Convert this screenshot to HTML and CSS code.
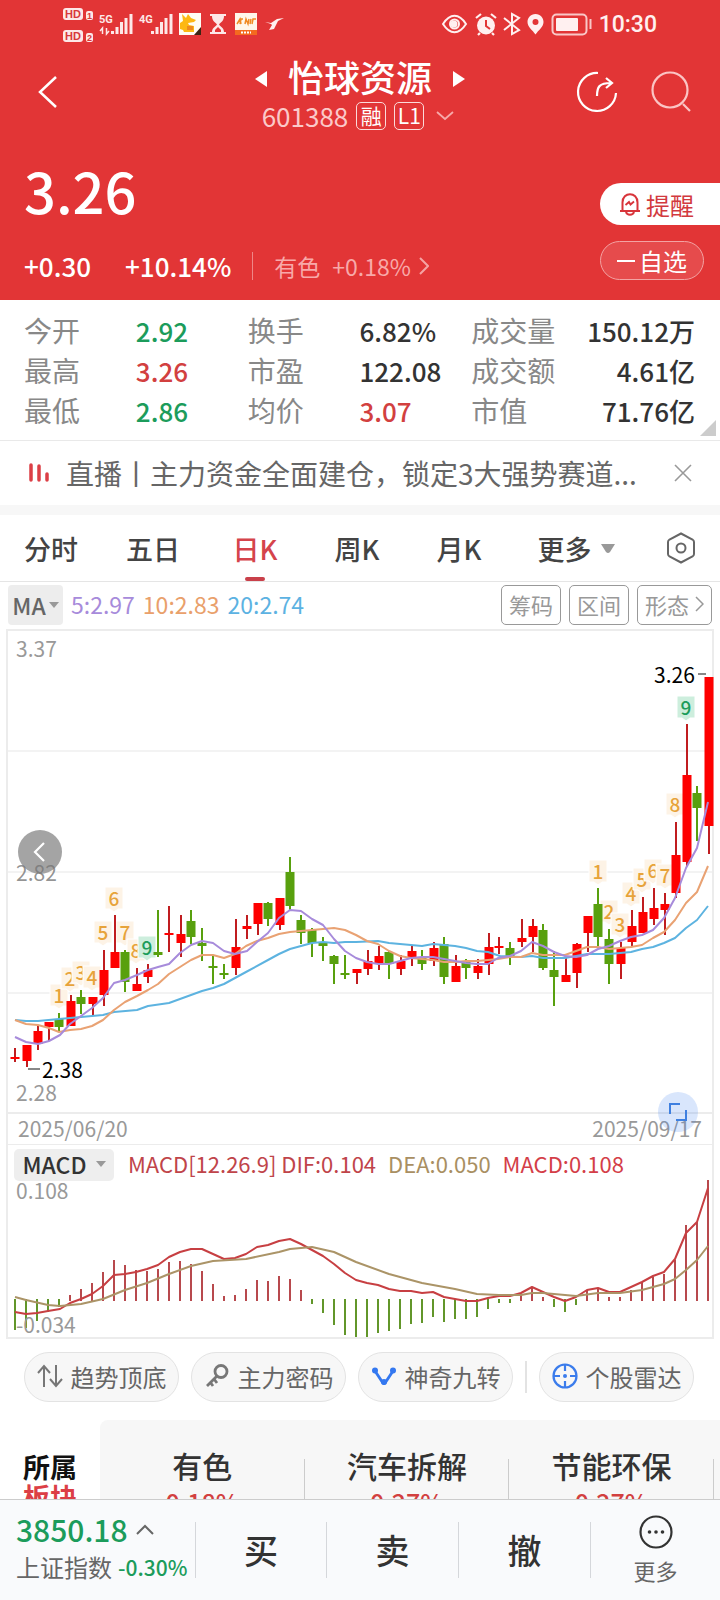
FILE: index.html
```html
<!DOCTYPE html>
<html lang="zh-CN">
<head>
<meta charset="utf-8">
<meta name="viewport" content="width=device-width, initial-scale=1">
<title>怡球资源 601388</title>
<link rel="stylesheet" href="styles.css">
</head>
<body>
<div class="app">
  <header class="hero">
    <div class="status">
      <svg class="status-left" viewBox="60 0 226 48" width="226" height="48" aria-hidden="true">
        <g fill="#fde8e8">
          <rect x="63" y="8" width="20" height="12" rx="3"/>
          <rect x="86" y="11" width="7" height="9" rx="2"/>
          <rect x="63" y="30" width="20" height="12" rx="3"/>
          <rect x="86" y="33" width="7" height="9" rx="2"/>
        </g>
        <g class="hd-text">
          <text x="65" y="18">HD</text><text x="65" y="40">HD</text>
        </g>
        <g class="sim-text"><text x="87" y="19">1</text><text x="87" y="41">2</text></g>
        <g class="net-text"><text x="99" y="23">5G</text><text x="139" y="23">4G</text></g>
        <path d="M102.500 34v-6l-2.500 3M106.500 28v6l2.500-3" fill="none" stroke="#fde8e8" stroke-width="1.500"/>
        <path d="M112.500 34v-3M117 34v-7M121.500 34v-12M126 34v-16M131 34v-20M152.500 34v-3M157 34v-7M161.500 34v-12M166 34v-16M171 34v-20" stroke="#fde8e8" stroke-width="3"/>
        <rect x="179" y="13" width="22" height="22" fill="#fffdf5"/>
        <path d="M182 14l4 4 2-4 3 4 5 2-2 2-6 1 1 2 5 1v6h-10l-1-2-3-1v-6l3-2z" fill="#fdb813"/>
        <path d="M187 26h6v4h-6z" fill="#ef8a1c"/><path d="M194 35l7-8v8z" fill="#3b2412"/>
        <path d="M210 14h16v2h-2c0 5-3 6-5 8.500 2 2.500 5 3.500 5 7.500h2v2h-16v-2h2c0-4 3-5 5-7.500-2-2.500-5-3.500-5-8.500h-2z" fill="#fde8e8"/>
        <path d="M215 30l3-3 3 3v2h-6z" fill="#e23536"/>
        <rect x="235" y="13" width="22" height="22" fill="#fff6ea"/>
        <path d="M237 24l3-5 1 5M243 19h-2l-1 5M245 24l1-5 2 5 1-5M251 19l-1 5M252 24l1-5h3" stroke="#f08a24" stroke-width="1.500" fill="none"/>
        <path d="M235 30h22v5h-22z" fill="#f46a1f"/><path d="M241 32.500h10" stroke="#fff" stroke-width="2" stroke-dasharray="2 1"/>
        <path d="M265 22l6 1 6-4 7-1-6 3-4 8-5 1 3-5-1-1z" fill="#fff0f0"/>
      </svg>
      <div class="status-right">
        <svg viewBox="442 0 152 48" width="152" height="48" aria-hidden="true">
          <g fill="none" stroke="#fff0f0" stroke-width="2">
            <path d="M444 24c7-11 16-11 23 0-7 11-16 11-23 0z"/>
            <circle cx="455.500" cy="24" r="4.500"/>
          </g>
          <circle cx="455" cy="24" r="3.500" fill="#fff0f0"/>
          <circle cx="487" cy="25.500" r="9" fill="#fff0f0"/>
          <path d="M477 18l5-4M497 18l-5-4M481 33l-2 2M493 33l2 2" stroke="#fff0f0" stroke-width="2.200"/>
          <path d="M487 20v6l4 3" stroke="#e23536" stroke-width="2" fill="none"/>
          <path d="M505 18l15 12-7 4v-20l7 4-15 12" fill="none" stroke="#fff0f0" stroke-width="2"/>
          <path fill-rule="evenodd" d="M536.500 14c-5 0-8 4-8 8 0 5 5 8 8 12.500 3-4.500 8-7.500 8-12.500 0-4-3-8-8-8zm0 5a3 3 0 1 1 0 6 3 3 0 0 1 0-6z" fill="#fff0f0"/>
          <rect x="553.500" y="14.500" width="34" height="20" rx="4" fill="none" stroke="#f9c7c7" stroke-width="2"/>
          <rect x="557" y="18" width="22" height="13" rx="1" fill="#fff0f0"/>
          <path d="M591.500 19v10" stroke="#f9c7c7" stroke-width="2"/>
        </svg>
        <span class="clock">10:30</span>
      </div>
    </div>

    <nav class="nav">
      <button class="icon-btn back" aria-label="返回"><svg viewBox="0 0 20 34" width="20" height="34"><path d="M18 2L2 17l16 15" fill="none" stroke="#fff" stroke-width="2.500"/></svg></button>
      <div class="title">
        <div class="title-row">
          <button class="plain" aria-label="上一只"><svg viewBox="0 0 12 18" width="12" height="18"><path d="M12 1v16L0 9z" fill="#fff"/></svg></button>
          <h1>怡球资源</h1>
          <button class="plain" aria-label="下一只"><svg viewBox="0 0 12 18" width="12" height="18"><path d="M0 1v16l12-8z" fill="#fff"/></svg></button>
        </div>
        <div class="code-row">
          <span class="code">601388</span>
          <span class="tag">融</span>
          <span class="tag">L1</span>
          <svg class="code-arrow" viewBox="0 0 18 10" width="18" height="10"><path d="M1 1l8 7 8-7" fill="none" stroke="#f7a9a9" stroke-width="1.800"/></svg>
        </div>
      </div>
      <div class="nav-tools">
        <button class="icon-btn" aria-label="分享"><svg viewBox="0 0 42 42" width="42" height="42"><g fill="none" stroke="#fff" stroke-width="2.200"><path d="M22 2a19 19 0 1 0 18 20"/><path d="M21 25c0-9 2-13 14-13M30 7l6 5-6 5"/></g></svg></button>
        <button class="icon-btn" aria-label="搜索"><svg viewBox="0 0 42 42" width="42" height="42"><g fill="none" stroke="#fbc4c4" stroke-width="2.200"><circle cx="20" cy="19" r="17.500"/><path d="M33 33l7 7"/></g></svg></button>
      </div>
    </nav>

    <section class="quote">
      <div>
        <p class="price">3.26</p>
        <div class="changes">
          <span class="delta">+0.30</span><span class="pct">+10.14%</span>
          <a class="industry" href="#sector"><span>有色</span><span>+0.18%</span><svg viewBox="0 0 10 18" width="10" height="18"><path d="M1 1l8 8-8 8" fill="none" stroke="#f5a3a3" stroke-width="2"/></svg></a>
        </div>
      </div>
      <div class="quote-actions">
        <button class="remind"><svg viewBox="0 0 22 24" width="22" height="24"><g fill="none" stroke="#d8343a" stroke-width="2"><path d="M3.500 18.500v-8c0-11 15-11 15 0v8M1 19h20M7 20c1 3.500 7 3.500 8 0"/><path d="M6.500 13l3.500-3 1.500 2.500 3.500-3" stroke-width="1.800"/></g></svg>提醒</button>
        <button class="fav"><svg viewBox="0 0 18 4" width="18" height="4"><path d="M0 2h18" stroke="#fff" stroke-width="2"/></svg>自选</button>
      </div>
    </section>
  </header>

  <main class="content">
    <dl class="stats">
      <div><dt>今开</dt><dd class="down">2.92</dd></div>
      <div><dt>换手</dt><dd>6.82%</dd></div>
      <div><dt>成交量</dt><dd>150.12万</dd></div>
      <div><dt>最高</dt><dd class="up">3.26</dd></div>
      <div><dt>市盈</dt><dd>122.08</dd></div>
      <div><dt>成交额</dt><dd>4.61亿</dd></div>
      <div><dt>最低</dt><dd class="down">2.86</dd></div>
      <div><dt>均价</dt><dd class="up">3.07</dd></div>
      <div><dt>市值</dt><dd>71.76亿</dd></div>
    </dl>

    <div class="live">
      <svg viewBox="0 0 22 20" width="22" height="20"><path d="M3 2v15M11 3v14M19 11v6" stroke="#dc3f46" stroke-width="3.500" stroke-linecap="round"/></svg>
      <a href="#live">直播丨主力资金全面建仓，锁定3大强势赛道...</a>
      <button class="plain" aria-label="关闭"><svg viewBox="0 0 18 18" width="18" height="18"><path d="M1 1l16 16M17 1L1 17" stroke="#999" stroke-width="1.600"/></svg></button>
    </div>

    <div class="tabs" role="tablist">
      <button role="tab">分时</button>
      <button role="tab">五日</button>
      <button role="tab" class="active" aria-selected="true">日K</button>
      <button role="tab">周K</button>
      <button role="tab">月K</button>
      <button class="tab-more">更多<svg viewBox="0 0 14 9" width="14" height="9"><path d="M0 0h14l-5 8q-2 2-4 0z" fill="#999"/></svg></button>
      <button class="tab-set" aria-label="设置"><svg viewBox="0 0 30 32" width="30" height="32"><g fill="none" stroke="#666" stroke-width="2"><path d="M15 1.500l11.500 6q1.500 1 1.500 2.500v12q0 1.500-1.500 2.500l-11.500 6-11.500-6Q2 23.500 2 22V10q0-1.500 1.500-2.500z"/><circle cx="15" cy="16" r="4.500"/></g></svg></button>
    </div>

    <div class="ma">
      <button class="ma-pick">MA<svg viewBox="0 0 10 6" width="10" height="6"><path d="M0 0h10L5 6z" fill="#999"/></svg></button>
      <span class="ma5">5:2.97</span><span class="ma10">10:2.83</span><span class="ma20">20:2.74</span>
      <div class="ma-tools">
        <button>筹码</button><button>区间</button>
        <button>形态<svg viewBox="0 0 9 16" width="9" height="16"><path d="M1 1l7 7-7 7" fill="none" stroke="#999" stroke-width="1.500"/></svg></button>
      </div>
    </div>

    <section class="chart">
      <svg class="plot" viewBox="8 631 704 481" role="img" aria-label="日K线图">
        <path d="M8 751h704M8 872h704M8 993h704" stroke="#f3f3f3" stroke-width="2"/>
        <g class="axis"><text x="16" y="657">3.37</text><text x="16" y="1101">2.28</text></g>
        <defs>
          <path id="flag" d="M-9-19H9V3H4L0 6-4 3H-9z" stroke="#fff" stroke-width="1"/>
        </defs>
        <g class="nine">
          <g transform="translate(59 1003)"><use href="#flag"/><text>1</text></g>
          <g transform="translate(70 986)"><use href="#flag"/><text>2</text></g>
          <g transform="translate(81 980)"><use href="#flag"/><text>3</text></g>
          <g transform="translate(92 985)"><use href="#flag"/><text>4</text></g>
          <g transform="translate(103 940)"><use href="#flag"/><text>5</text></g>
          <g transform="translate(114 906)"><use href="#flag"/><text>6</text></g>
          <g transform="translate(125 940)"><use href="#flag"/><text>7</text></g>
          <g transform="translate(136 958)"><use href="#flag"/><text>8</text></g>
          <g class="last" transform="translate(147 955)"><use href="#flag"/><text>9</text></g>
          <g transform="translate(598 879)"><use href="#flag"/><text>1</text></g>
          <g transform="translate(609 919)"><use href="#flag"/><text>2</text></g>
          <g transform="translate(620 932)"><use href="#flag"/><text>3</text></g>
          <g transform="translate(631 901)"><use href="#flag"/><text>4</text></g>
          <g transform="translate(642 887)"><use href="#flag"/><text>5</text></g>
          <g transform="translate(653 878)"><use href="#flag"/><text>6</text></g>
          <g transform="translate(665 883)"><use href="#flag"/><text>7</text></g>
          <g transform="translate(675 812)"><use href="#flag"/><text>8</text></g>
          <g class="last" transform="translate(686 715)"><use href="#flag"/><text>9</text></g>
        </g>
        <path class="wick rise" d="M15 1048V1062M27 1046V1067M38 1026V1050M49 1022V1041M71 995V1026M93 997V1015M104 950V1006M115 915V968M137 968V991M148 964V983M169 906V952M181 915V957M236 919V975M247 915V939M258 903V935M280 898V930M357 969V984M368 950V975M379 946V970M401 955V975M412 946V966M434 942V966M456 955V982M478 959V979M489 933V975M499 937V954M522 919V947M533 919V952M566 957V982M577 943V988M588 916V952M621 942V979M632 910V946M643 897V933M654 888V925M665 893V935M676 822V898M687 724V866M709 677V854"/>
        <path class="wick fall" d="M59 1013V1032M81 990V1014M125 950V992M158 910V957M191 910V944M202 928V961M213 956V984M224 964V979M268 902V926M290 857V910M301 915V944M312 928V957M323 937V961M334 955V984M345 955V979M389 951V979M422 950V970M444 937V984M466 959V979M510 942V965M543 924V970M554 951V1006M598 888V946M609 929V984M697 786V841"/>
        <path class="body rise" d="M15 1057V1059M27 1045V1061M38 1031V1044M49 1022V1027M71 1001V1026M93 997V1004M104 970V995M115 952V968M137 984V991M148 970V977M169 933V935M181 934V943M236 947V968M247 926V929M258 903V924M280 898V925M357 969V973M368 961V969M379 956V964M401 961V969M412 951V958M434 948V961M456 966V982M478 966V973M489 947V964M499 946V948M522 938V942M533 926V937M566 975V982M577 944V973M588 916V933M621 948V964M632 926V942M643 912V933M654 908V919M665 904V910M676 855V893M687 775V862M709 677V826"/>
        <path class="body fall" d="M59 1019V1027M81 997V1004M125 952V982M158 952V955M191 921V937M202 943V946M213 966V968M224 973V975M268 903V919M290 872V906M301 920V933M312 930V943M323 943V946M334 956V964M345 973V975M389 952V964M422 958V964M444 944V977M466 962V968M510 948V956M543 930V968M554 970V977M598 904V937M609 939V964M697 793V808"/>
        <polyline class="line ma20-line" points="15,1020 26,1021 38,1021 59,1019 81,1017 103,1015 114,1012 137,1010 148,1006 169,1003 180,999 202,991 213,988 224,984 235,978 246,972 268,960 279,954 290,949 312,943 323,942 334,943 345,942 356,942 378,941 389,943 411,945 422,946 433,944 444,945 455,946 466,948 477,951 488,952 500,956 521,957 532,956 543,958 565,958 576,956 587,954 609,954 631,952 642,949 653,947 664,943 675,938 686,928 697,920 708,906"/>
        <polyline class="line ma10-line" points="15,1020 26,1024 38,1025 49,1028 59,1032 70,1030 81,1029 92,1026 103,1020 114,1010 125,1002 137,996 148,990 158,984 169,974 180,967 191,960 202,955 213,955 224,958 235,954 246,946 257,941 268,938 279,934 290,932 301,931 312,930 323,929 334,928 345,930 356,935 367,941 378,944 389,951 400,956 411,958 422,959 433,960 444,962 455,962 466,961 477,961 488,960 498,959 510,957 521,957 532,953 543,955 554,955 565,955 576,951 587,947 598,947 609,949 620,948 631,947 642,945 653,938 664,932 675,920 686,903 697,892 708,866"/>
        <polyline class="line ma5-line" points="15,1037 26,1042 38,1044 49,1041 60,1035 70,1024 81,1016 92,1008 103,998 114,983 125,980 137,975 148,970 158,967 169,964 180,953 191,945 202,941 213,943 224,951 235,954 247,951 257,942 268,933 279,918 290,910 301,911 312,919 323,925 334,939 345,951 356,958 367,962 378,964 389,964 400,961 411,958 422,957 433,957 444,959 455,961 466,963 477,964 488,964 498,958 510,956 521,951 532,942 543,946 554,952 565,956 576,957 587,955 598,949 609,946 620,941 631,937 642,935 653,930 664,918 675,898 686,868 697,848 708,802"/>
        <path d="M28 1069h12M698 674h8" stroke="#888" stroke-width="2"/>
        <g class="mark"><text x="42" y="1078">2.38</text><text x="654" y="683">3.26</text></g>
        <circle cx="40" cy="852" r="22" fill="#a4a4a4"/>
        <path d="M44 843l-9 9 9 9" fill="none" stroke="#fff" stroke-width="2.200"/>
        <g class="axis mid"><text x="16" y="881">2.82</text></g>
      </svg>
      <div class="dates"><time>2025/06/20</time><time>2025/09/17</time>
        <button class="expand" aria-label="全屏"><svg viewBox="0 0 20 20" width="20" height="20"><path d="M2 12V2h10M18 8v10H8" fill="none" stroke="#3f80e0" stroke-width="2"/></svg></button>
      </div>
      <div class="macd-head">
        <button class="macd-pick">MACD<svg viewBox="0 0 10 6" width="10" height="6"><path d="M0 0h10L5 6z" fill="#999"/></svg></button>
        <span class="dif">MACD[12.26.9] DIF:0.104</span><span class="dea">DEA:0.050</span><span class="macd">MACD:0.108</span>
      </div>
      <svg class="plot" viewBox="8 1181 704 156" role="img" aria-label="MACD">
        <path class="bar fall" d="M15 1299V1330M26 1299V1328M37 1299V1321M48 1299V1312M59 1299V1307M312 1299V1304M323 1299V1313M334 1299V1325M345 1299V1335M356 1299V1337M367 1299V1337M378 1299V1333M389 1299V1331M400 1299V1329M411 1299V1324M422 1299V1323M433 1299V1317M444 1299V1322M455 1299V1319M466 1299V1319M477 1299V1317M488 1299V1309M499 1299V1303M510 1299V1303M554 1299V1307M565 1299V1312M576 1299V1305"/>
        <path class="bar rise" d="M70 1301V1295M81 1301V1289M92 1301V1283M103 1301V1272M114 1301V1260M125 1301V1265M136 1301V1270M147 1301V1271M158 1301V1269M169 1301V1262M180 1301V1261M191 1301V1264M202 1301V1271M213 1301V1284M224 1301V1296M235 1301V1295M246 1301V1289M257 1301V1280M268 1301V1281M279 1301V1276M290 1301V1279M301 1301V1290M521 1301V1295M532 1301V1288M543 1301V1297M587 1301V1290M598 1301V1288M609 1301V1297M620 1301V1297M631 1301V1290M642 1301V1282M653 1301V1277M664 1301V1274M675 1301V1260M686 1301V1225M697 1301V1222M708 1301V1180"/>
        <g class="axis"><text x="16" y="1199">0.108</text><text x="16" y="1333">-0.034</text></g>
        <polyline class="line dif-line" points="15,1312 26,1314 37,1313 48,1311 60,1309 70,1303 81,1299 92,1294 103,1286 114,1275 125,1274 136,1272 147,1269 158,1265 169,1257 180,1252 191,1249 202,1249 213,1254 224,1259 235,1258 246,1254 257,1247 268,1245 279,1241 290,1239 301,1244 312,1250 323,1256 334,1264 345,1273 356,1280 367,1283 378,1285 389,1289 400,1291 411,1291 422,1293 433,1292 444,1297 455,1299 466,1301 477,1301 488,1298 499,1296 510,1296 521,1293 532,1287 543,1292 554,1297 565,1301 576,1297 587,1290 598,1288 609,1292 620,1292 631,1287 642,1282 653,1276 664,1272 675,1259 686,1233 697,1222 708,1188"/>
        <polyline class="line dea-line" points="15,1297 26,1300 48,1305 60,1306 81,1304 103,1299 125,1290 147,1283 169,1274 191,1266 213,1261 246,1259 279,1252 290,1249 312,1247 334,1252 356,1262 389,1274 422,1283 455,1289 477,1294 499,1295 521,1295 532,1293 543,1293 576,1296 598,1293 620,1293 642,1290 653,1287 664,1284 675,1279 686,1270 697,1260 708,1246"/>
      </svg>
    </section>

    <div class="tools">
      <button><svg viewBox="0 0 26 26" width="26" height="26"><path d="M7 24V4M1 10l6-7 6 7M19 2v20M13 16l6 7 6-7" fill="none" stroke="#777" stroke-width="2"/></svg>趋势顶底</button>
      <button><svg viewBox="0 0 26 26" width="26" height="26"><g fill="none" stroke="#777" stroke-width="2.800"><circle cx="17" cy="8.500" r="6"/><path d="M13 13L3 23M6 19l3 4M10 16l3 4"/></g></svg>主力密码</button>
      <button><svg viewBox="0 0 26 26" width="26" height="26"><path d="M4 8l8 12q1 1 2 0l8-12" fill="none" stroke="#3478f0" stroke-width="2.800"/><g fill="#3478f0"><circle cx="4" cy="7.500" r="3"/><circle cx="22" cy="7.500" r="3"/><circle cx="13" cy="19" r="3"/></g></svg>神奇九转</button>
      <i class="tools-sep"></i>
      <button><svg viewBox="0 0 26 26" width="26" height="26"><g fill="none" stroke="#3b7cec" stroke-width="2.200"><circle cx="13" cy="13" r="11.500"/><path d="M13 1v7M13 18v7M1 13h7M18 13h7"/></g><circle cx="13" cy="13" r="2" fill="#3b7cec"/></svg>个股雷达</button>
    </div>

    <section class="sector" id="sector">
      <h2>所属<br><em>板块</em></h2>
      <ul>
        <li><a href="#s1">有色<b>0.18%</b></a></li>
        <li><a href="#s2">汽车拆解<b>0.27%</b></a></li>
        <li><a href="#s3">节能环保<b>0.27%</b></a></li>
      </ul>
    </section>
  </main>

  <footer class="bottom">
    <button class="index">
      <span class="index-top">3850.18<svg viewBox="0 0 18 11" width="18" height="11"><path d="M1 10l8-8 8 8" fill="none" stroke="#666" stroke-width="2"/></svg></span>
      <span class="index-sub">上证指数<b>-0.30%</b></span>
    </button>
    <button class="trade">买</button>
    <button class="trade">卖</button>
    <button class="trade">撤</button>
    <button class="more"><svg viewBox="0 0 36 36" width="36" height="36"><circle cx="18" cy="18" r="15.500" fill="none" stroke="#333" stroke-width="2.200"/><g fill="#333"><circle cx="11.500" cy="18" r="1.800"/><circle cx="18" cy="18" r="1.800"/><circle cx="24.500" cy="18" r="1.800"/></g></svg>更多</button>
  </footer>
</div>
</body>
</html>
```
FILE: styles.css
```css
* { box-sizing: border-box; }
body {
  margin: 0;
  background: #fff;
  color: #333;
  font-family: "Noto Sans CJK SC", "Liberation Sans", sans-serif;
}
h1, h2, p, dl, dd, ul { margin: 0; padding: 0; }
ul { list-style: none; }
a { color: inherit; text-decoration: none; }
svg { display: block; flex: none; }
button {
  margin: 0;
  padding: 0;
  border: 0;
  background: none;
  color: inherit;
  font: inherit;
}
.app { display: flex; flex-direction: column; height: 100vh; overflow: hidden; }

/* header */
.hero { flex: none; background: #e23536; color: #fff; }
.status {
  display: flex;
  justify-content: space-between;
  height: 48px;
  padding: 0 63px 0 60px;
}
.status-right { display: flex; align-items: center; gap: 6px; }
.clock { padding-top: 2px; font: 500 23px/46px Roboto, sans-serif; color: #fff0f0; }
.hd-text { font: 700 11px "Liberation Sans", sans-serif; fill: #d8393b; }
.sim-text { font: 700 9px "Liberation Sans", sans-serif; fill: #d8393b; }
.net-text { font: 700 11px Roboto, sans-serif; fill: #fde8e8; }

.nav {
  display: grid;
  grid-template-columns: 1fr auto 1fr;
  align-items: start;
  padding: 7px 28px 0;
}
.icon-btn { display: flex; align-items: center; height: 74px; }
.back { padding-left: 10px; }
.title-row { display: flex; align-items: center; justify-content: center; gap: 21px; height: 42px; }
.title-row .plain { padding-top: 6px; }
.title h1 { font-size: 36px; font-weight: 500; line-height: 40px; }
.plain { display: flex; }
.code-row { display: flex; align-items: center; justify-content: center; gap: 8px; height: 37px; padding-right: 4px; }
.code { font-size: 26px; line-height: 37px; color: #fbc9c9; }
.tag {
  width: 30px;
  height: 28px;
  border: 1px solid #fbdada;
  border-radius: 5px;
  font-size: 21px;
  line-height: 25px;
  text-align: center;
}
.code-arrow { margin-left: 4px; }
.nav-tools { display: flex; justify-content: flex-end; gap: 32px; }

.quote { display: flex; justify-content: space-between; padding: 24px 0 16px 24px; }
.price { font-size: 56px; font-weight: 500; line-height: 64px; }
.changes { display: flex; align-items: center; margin-top: 26px; font-size: 26px; line-height: 36px; font-weight: 500; }
.pct { margin-left: 34px; }
.industry {
  display: flex;
  align-items: center;
  gap: 12px;
  height: 28px;
  margin-left: 21px;
  padding-left: 21px;
  border-left: 1px solid #ef8687;
  color: #f8a9a9;
  font-size: 23px;
  font-weight: 400;
}
.industry svg { margin-left: -4px; }
.quote-actions { display: flex; flex-direction: column; gap: 16px; width: 120px; padding-top: 25px; font-size: 24px; }
.remind {
  display: flex;
  align-items: center;
  gap: 5px;
  height: 42px;
  padding-left: 19px;
  border-radius: 21px 0 0 21px;
  background: #fff;
  color: #d2393e;
}
.fav {
  display: flex;
  align-items: center;
  justify-content: center;
  gap: 4px;
  width: 104px;
  height: 39px;
  border: 1px solid #f3a3a3;
  border-radius: 20px;
  background: #e64b4c;
}

/* stats */
.content { flex: 1; min-height: 0; overflow: hidden; }
.stats {
  position: relative;
  display: grid;
  grid-template-columns: repeat(3, 1fr);
  padding: 10px 25px 10px 24px;
  border-bottom: 1px solid #e9e9e9;
  font-size: 28px;
  line-height: 40px;
}
.stats::after {
  content: "";
  position: absolute;
  right: 4px;
  bottom: 4px;
  border: 8px solid #ccc;
  border-top-color: transparent;
  border-left-color: transparent;
}
.stats div { display: flex; }
.stats dt { width: 50%; color: #888; }
.stats dd { font-size: 26px; font-weight: 500; line-height: 42px; height: 40px; white-space: nowrap; }
.stats div:nth-child(3n) { justify-content: space-between; }
.stats div:nth-child(3n) dt { width: auto; }
.stats .up { color: #d2403f; }
.stats .down { color: #1c9c5b; }

.live {
  display: flex;
  align-items: center;
  height: 64px;
  padding: 0 28px 0 28px;
  color: #666;
  font-size: 28px;
}
.live a { flex: 1; margin-left: 16px; white-space: nowrap; }

/* tabs */
.tabs {
  display: flex;
  height: 77px;
  border-top: 10px solid #f7f7f7;
  border-bottom: 1px solid #e5e5e5;
  font-size: 27px;
  font-weight: 500;
  color: #444;
}
.tabs button { position: relative; flex: 102 1 0; }
.tabs .active { color: #d5444b; }
.tabs .active::after {
  content: "";
  position: absolute;
  left: 50%;
  bottom: 0;
  width: 20px;
  height: 4px;
  margin-left: -10px;
  border-radius: 2px;
  background: #c9404a;
}
.tabs .tab-more { flex-grow: 132; display: flex; align-items: center; justify-content: center; gap: 9px; }
.tabs .tab-set { flex-grow: 78; display: flex; align-items: center; justify-content: center; }

.ma { display: flex; align-items: center; gap: 8px; height: 47px; padding: 0 8px 2px; font-size: 23px; line-height: 36px; }
.ma > span { padding-bottom: 2px; }
.ma-pick {
  display: flex;
  align-items: center;
  justify-content: center;
  gap: 3px;
  width: 55px;
  height: 40px;
  border-radius: 4px;
  background: #ededed;
  color: #666;
  font-weight: 500;
}
.ma5 { color: #a78bdb; }
.ma10 { color: #e9a06b; }
.ma20 { color: #5cb2e2; }
.ma-tools { display: flex; gap: 8px; margin-left: auto; }
.ma-tools button {
  display: flex;
  align-items: center;
  justify-content: center;
  gap: 6px;
  height: 40px;
  padding: 0 7px 2px;
  border: 1px solid #999;
  border-radius: 5px;
  color: #999;
  font-size: 22px;
}

/* chart */
.chart { margin: 0 6px; border: 2px solid #ececec; }
.plot { width: 100%; height: auto; overflow: visible; }
.axis { font-size: 21px; fill: #999; }
.mark { font-size: 21px; fill: #000; }
.mid { fill: #777; fill-opacity: .8; }
.nine { font-size: 19px; font-weight: 500; text-anchor: middle; fill: #fdf3e6; }
.nine text { fill: #e7a33a; }
.nine .last { fill: #cdeedd; }
.nine .last text { fill: #1c9c5b; }
.wick { stroke-width: 2; }
.body { stroke-width: 9; }
.wick.rise { stroke: #c01d20; }
.body.rise { stroke: #fe0000; }
.wick.fall, .body.fall { stroke: #58a00e; }
.bar { stroke-width: 2; }
.bar.rise { stroke: #b8494d; }
.bar.fall { stroke: #62962a; }
.line { fill: none; stroke-width: 2; stroke-linejoin: round; }
.ma5-line { stroke: #a78bdb; }
.ma10-line { stroke: #e9a273; }
.ma20-line { stroke: #5db3e0; }
.dif-line { stroke: #c73f42; }
.dea-line { stroke: #ab9467; }
.dates {
  position: relative;
  display: flex;
  justify-content: space-between;
  padding: 0 10px 2px;
  border-top: 2px solid #ececec;
  border-bottom: 1px solid #ececec;
  color: #999;
  font-size: 21px;
  line-height: 28px;
}
.expand {
  position: absolute;
  right: 14px;
  top: -22px;
  display: flex;
  align-items: center;
  justify-content: center;
  width: 40px;
  height: 40px;
  border-radius: 50%;
  background: rgba(64, 128, 240, .2);
}
.macd-head { display: flex; gap: 12px; height: 36px; padding: 4px 6px 0; font-size: 22px; line-height: 29px; }
.macd-pick {
  display: flex;
  align-items: center;
  justify-content: center;
  gap: 9px;
  width: 100px;
  height: 32px;
  margin-right: 2px;
  padding-bottom: 2px;
  border-radius: 5px;
  background: #eee;
  font-size: 23px;
  font-weight: 500;
}
.dif { color: #c0444a; }
.dea { color: #a98f62; }
.macd { color: #d43e48; }

.tools { display: flex; align-items: center; gap: 12px; padding: 13px 26px 0 24px; }
.tools button {
  display: flex;
  align-items: center;
  justify-content: center;
  flex: 1;
  gap: 8px;
  height: 50px;
  padding-bottom: 2px;
  border: 1px solid #e3e3e3;
  border-radius: 25px;
  background: #f7f7f7;
  color: #666;
  font-size: 24px;
  white-space: nowrap;
}
.tools-sep { width: 2px; height: 32px; background: #e3e3e3; }

.sector { display: flex; margin-top: 18px; }
.sector h2 { width: 100px; padding: 32px 0 0 23px; font-size: 27px; line-height: 30px; color: #111; }
.sector em { color: #dc3f46; font-style: normal; }
.sector ul { flex: 1; display: flex; padding-top: 28px; border-radius: 8px 0 0; background: #f7f7f7; }
.sector li { position: relative; flex: none; width: 33%; text-align: center; font-size: 30px; line-height: 34px; font-weight: 500; }
.sector li::after { content: ""; position: absolute; right: 0; top: 11px; bottom: 0; width: 1px; background: #ccc; }
.sector b { display: block; font-size: 25px; font-weight: 500; line-height: 40px; color: #d2403f; }

/* bottom bar */
.bottom {
  flex: none;
  display: grid;
  grid-template-columns: 195fr 132fr 132fr 132fr 129fr;
  align-items: center;
  height: 101px;
  border-top: 1px solid #ccc;
  background: #f9fafc;
}
.bottom button { height: 56px; border-right: 1px solid #d5d7db; }
.bottom .index { padding: 0 0 6px 16px; height: 84px; border: 0; text-align: left; white-space: nowrap; }
.index-top { display: flex; align-items: center; gap: 8px; font-size: 30px; font-weight: 500; line-height: 40px; color: #1c9c5b; }
.index-sub { display: flex; align-items: center; gap: 6px; font-size: 24px; line-height: 36px; color: #666; }
.index-sub b { font-size: 21px; font-weight: 500; color: #1c9c5b; }
.bottom .trade { font-size: 34px; font-weight: 500; line-height: 56px; }
.bottom .trade:nth-child(2) { border-left: 1px solid #d5d7db; }
.bottom .more { display: flex; flex-direction: column; align-items: center; gap: 4px; height: 72px; border: 0; font-size: 22px; line-height: 32px; color: #666; }
```
